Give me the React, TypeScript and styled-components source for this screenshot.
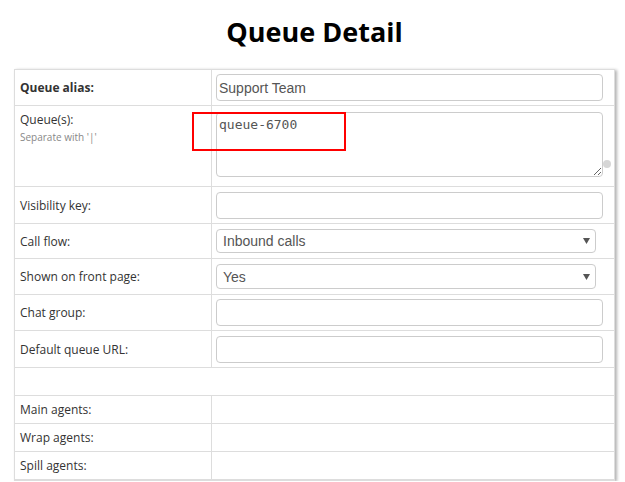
import React from 'react';
import styled, { createGlobalStyle } from 'styled-components';

const GlobalStyle = createGlobalStyle`
  html, body { margin: 0; padding: 0; background: #fff; }
  body { font-family: "Open Sans", sans-serif; }
`;

const Page = styled.div`
  width: 601px;
  padding: 13px 0 0 14px;
`;

const Title = styled.h1`
  margin: 0 0 19px;
  font-family: "Open Sans", sans-serif;
  font-weight: 700;
  font-size: 27px;
  line-height: 37px;
  text-align: center;
  color: #000;
`;

const Panel = styled.div`
  border: 1px solid #ddd;
  box-shadow: 2px 1px 3px rgba(0, 0, 0, 0.3);
  background: #fff;
`;

const Row = styled.div`
  position: relative;
  display: grid;
  grid-template-columns: 197px 1fr;
  border-bottom: 1px solid #ddd;
`;

const SpacerRow = styled.div`
  height: 27px;
  border-bottom: 1px solid #ddd;
`;

const Label = styled.div<{ $top?: boolean; $bold?: boolean }>`
  display: flex;
  flex-direction: column;
  justify-content: ${(p) => (p.$top ? 'flex-start' : 'center')};
  padding: ${(p) => (p.$top ? '5px 5px 0' : '0 5px')};
  border-right: 1px solid #ddd;
  font-family: "Open Sans", sans-serif;
  font-size: 12px;
  line-height: 17px;
  color: #333;
  font-weight: ${(p) => (p.$bold ? 700 : 400)};
`;

const Hint = styled.span`
  margin-top: 2px;
  font-size: 10px;
  line-height: 14px;
  color: #888;
`;

type Kind = 'input' | 'select' | 'area' | 'empty';

const padFor: Record<Kind, string> = {
  input: '11px 4px 4px',
  select: '18px 5px 4px',
  area: '0 9px 4px',
  empty: '0 0 0',
};

const topFor: Record<Kind, number> = { input: 4, select: 5, area: 6, empty: 0 };

const Value = styled.div<{ $kind: Kind; $extra?: number }>`
  display: flex;
  align-items: flex-start;
  min-height: ${(p) => (p.$kind === 'empty' ? '27px' : '0')};
  padding: ${(p) => topFor[p.$kind] + (p.$extra ?? 0)}px ${(p) => padFor[p.$kind]};
`;

const TextInput = styled.input`
  display: block;
  width: 100%;
  height: 27px;
  box-sizing: border-box;
  margin: 0;
  border: 1px solid #ccc;
  border-radius: 4px;
  padding: 0 2px;
  font-family: "Liberation Sans", Arial, sans-serif;
  font-size: 14px;
  color: #555;
  background: #fff;
  outline: none;
`;

const TextArea = styled.textarea`
  display: block;
  flex: none;
  width: 387px;
  height: 65px;
  box-sizing: border-box;
  margin: 0;
  border: 1px solid #ccc;
  border-radius: 4px;
  padding: 4px 2px;
  font-family: "DejaVu Sans Mono", "Liberation Mono", monospace;
  font-size: 13px;
  line-height: 15px;
  color: #555;
  background: #fff;
  resize: vertical;
  outline: none;
`;

const Grip = styled.span`
  flex: none;
  align-self: flex-end;
  width: 8px;
  height: 8px;
  margin-bottom: 9px;
  border-radius: 50%;
  background: #d6d6d6;
`;

const SelectBox = styled.div<{ $h: number }>`
  display: flex;
  align-items: center;
  justify-content: space-between;
  width: 100%;
  height: ${(p) => p.$h}px;
  box-sizing: border-box;
  border: 1px solid #ccc;
  border-radius: 4px;
  padding: 0 5px 0 6px;
  font-family: "Liberation Sans", Arial, sans-serif;
  font-size: 14px;
  color: #555;
  background: #fff;
`;

const Marker = styled.div`
  position: absolute;
  left: 177px;
  top: 6px;
  width: 154px;
  height: 39px;
  box-sizing: border-box;
  border: 2px solid #f00;
  pointer-events: none;
`;

const Caret = () => (
  <svg width="7" height="6" viewBox="0 0 7 6" aria-hidden="true">
    <path d="M0 0 L7 0 L3.5 6 Z" fill="#555" />
  </svg>
);

const InputRow = ({
  label,
  value = '',
  bold = false,
  extra = 0,
}: {
  label: string;
  value?: string;
  bold?: boolean;
  extra?: number;
}) => (
  <Row>
    <Label $bold={bold}>{label}</Label>
    <Value $kind="input" $extra={extra}>
      <TextInput defaultValue={value} />
    </Value>
  </Row>
);

const SelectRow = ({ label, value, height = 25 }: { label: string; value: string; height?: number }) => (
  <Row>
    <Label>{label}</Label>
    <Value $kind="select">
      <SelectBox $h={height}>
        <span>{value}</span>
        <Caret />
      </SelectBox>
    </Value>
  </Row>
);

const AgentRow = ({ label }: { label: string }) => (
  <Row>
    <Label>{label}</Label>
    <Value $kind="empty" />
  </Row>
);

export default function App() {
  return (
    <>
      <GlobalStyle />
      <Page>
        <Title>Queue Detail</Title>
        <Panel>
          <InputRow label="Queue alias:" value="Support Team" bold />
          <Row>
            <Label $top>
              <span>Queue(s):</span>
              <Hint>Separate with '|'</Hint>
            </Label>
            <Value $kind="area">
              <TextArea defaultValue="queue-6700" />
              <Grip />
            </Value>
            <Marker />
          </Row>
          <InputRow label="Visibility key:" extra={1} />
          <SelectRow label="Call flow:" value="Inbound calls" height={24} />
          <SelectRow label="Shown on front page:" value="Yes" />
          <InputRow label="Chat group:" />
          <InputRow label="Default queue URL:" extra={1} />
          <SpacerRow />
          <AgentRow label="Main agents:" />
          <AgentRow label="Wrap agents:" />
          <AgentRow label="Spill agents:" />
        </Panel>
      </Page>
    </>
  );
}
